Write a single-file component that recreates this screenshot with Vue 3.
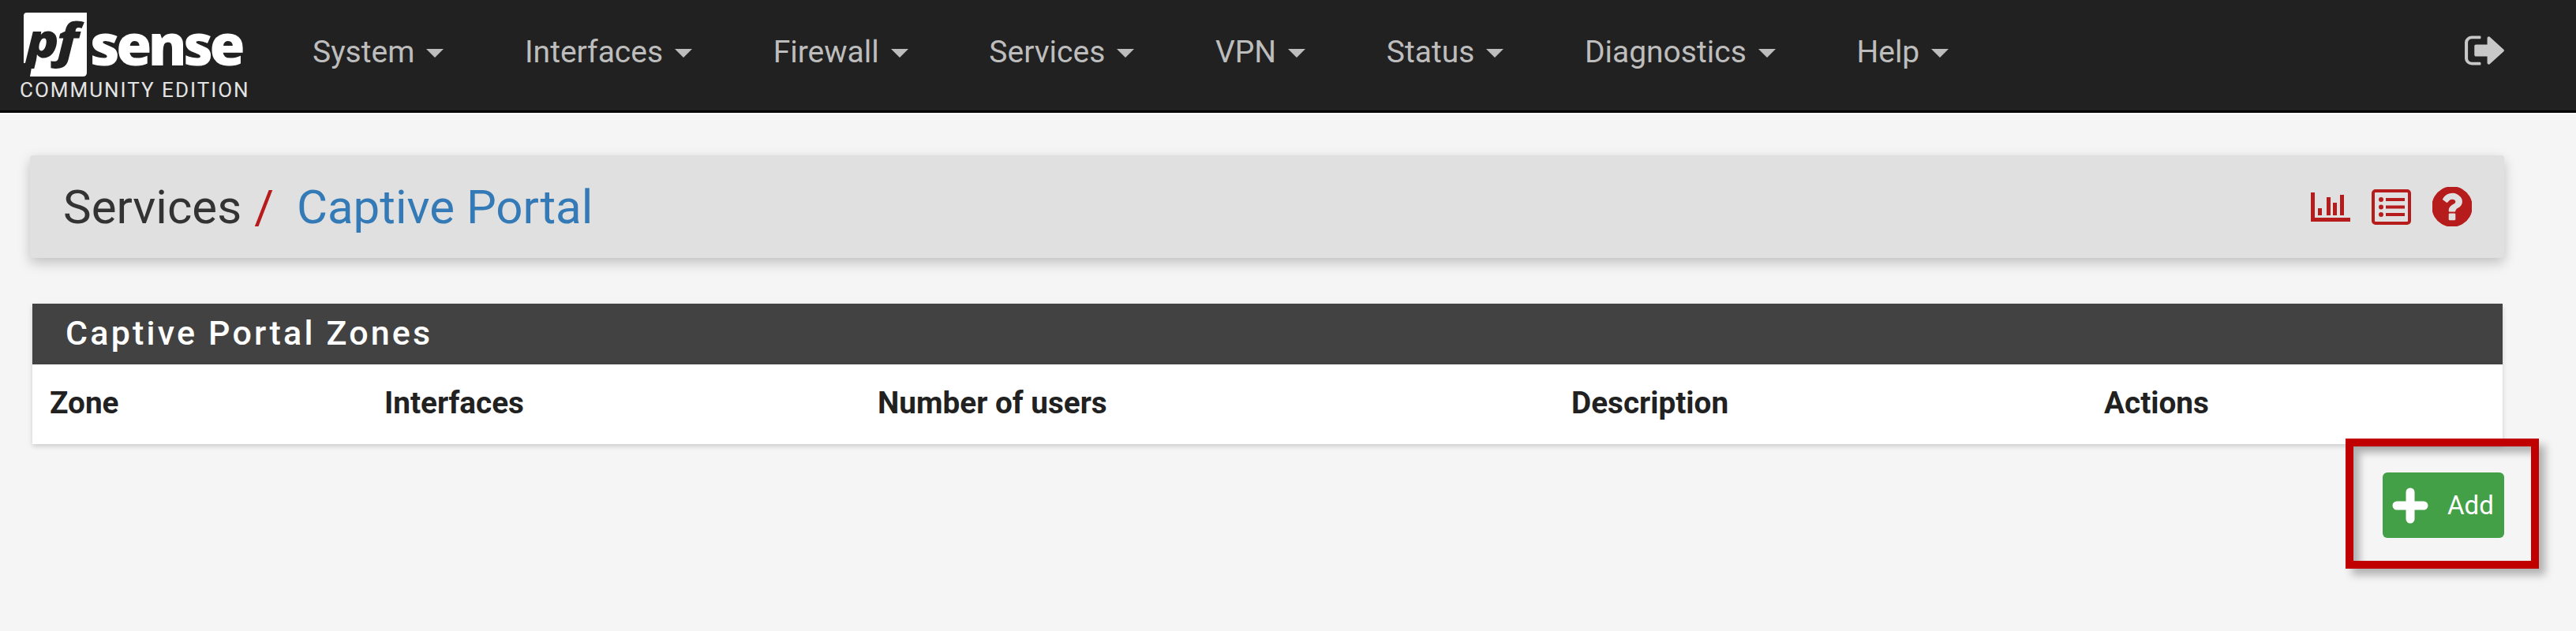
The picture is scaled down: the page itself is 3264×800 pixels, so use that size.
<script setup>
const menu = ['System', 'Interfaces', 'Firewall', 'Services', 'VPN', 'Status', 'Diagnostics', 'Help']
const columns = [
  { label: 'Zone', w: 424 },
  { label: 'Interfaces', w: 625 },
  { label: 'Number of users', w: 879 },
  { label: 'Description', w: 675 },
  { label: 'Actions', w: 460 }
]
</script>

<template>
  <div class="page">
    <header class="navbar">
      <div class="brand">
        <div class="logo">
          <svg class="logo-box" width="84" height="84" viewBox="0 0 84 84">
            <path d="M6 0 H82 V76 Q82 81 77 81 H10 L13 64 L2 64 V4 Q2 0 6 0Z" fill="#fff" />
            <text class="pf" transform="translate(5 57) scale(1.15 1)">pf</text>
          </svg>
          <span class="sense">sense</span>
        </div>
        <div class="edition">COMMUNITY EDITION</div>
      </div>
      <nav class="menu">
        <a v-for="item in menu" :key="item" class="menu-item">
          <span>{{ item }}</span><i class="caret"></i>
        </a>
      </nav>
      <svg class="logout" width="57" height="52" viewBox="0 0 1792 1792" preserveAspectRatio="none">
        <path fill="#c8c8c8" d="M704 1440q0 4 1 20t.5 26.5-3 23.5-10 19.5-20.5 6.5h-320q-119 0-203.5-84.5t-84.5-203.5v-704q0-119 84.5-203.5t203.5-84.5h320q13 0 22.5 9.5t9.5 22.5q0 4 1 20t.5 26.5-3 23.5-10 19.5-20.5 6.5h-320q-66 0-113 47t-47 113v704q0 66 47 113t113 47h312l11.5 1 11.5 3 8 5.5 7 9 2 13.5zm928-544q0 26-19 45l-544 544q-19 19-45 19t-45-19-19-45v-288h-448q-26 0-45-19t-19-45v-384q0-26 19-45t45-19h448v-288q0-26 19-45t45-19 45 19l544 544q19 19 19 45z" />
      </svg>
    </header>

    <main class="content">
      <section class="titlebar">
        <h1 class="crumbs">
          <span>Services</span><span class="slash">/</span><a class="current">Captive Portal</a>
        </h1>
        <div class="tools">
          <svg width="50" height="37" viewBox="0 0 50 37" fill="#b71c1c">
            <rect x="0" y="0" width="5" height="37" />
            <rect x="0" y="32" width="50" height="5" />
            <rect x="9" y="20" width="5" height="9" />
            <rect x="20" y="6" width="5" height="23" />
            <rect x="28" y="13" width="5" height="16" />
            <rect x="37" y="3" width="5" height="26" />
          </svg>
          <svg width="50" height="45" viewBox="0 0 50 45" fill="#b71c1c">
            <rect x="2" y="2" width="46" height="41" rx="3" fill="none" stroke="#b71c1c" stroke-width="4" />
            <circle cx="12" cy="13" r="3" />
            <circle cx="12" cy="22.500" r="3" />
            <circle cx="12" cy="32" r="3" />
            <rect x="18" y="11" width="24" height="4" />
            <rect x="18" y="20.500" width="24" height="4" />
            <rect x="18" y="30" width="24" height="4" />
          </svg>
          <svg width="50" height="50" viewBox="150 150 1492 1492">
            <path fill="#b71c1c" d="M1024 1376v-192q0-14-9-23t-23-9h-192q-14 0-23 9t-9 23v192q0 14 9 23t23 9h192q14 0 23-9t9-23zm256-672q0-88-55.500-163t-138.500-116-170-41q-243 0-371 213-15 24 8 42l132 100q7 6 19 6 16 0 25-12 53-68 86-92 34-24 86-24 48 0 85.500 26t37.500 59q0 38-20 61t-68 45q-63 28-115.500 86.500t-52.500 125.500v36q0 14 9 23t23 9h192q14 0 23-9t9-23q0-19 21.500-49.500t54.500-49.500q32-18 49-28.500t46-35 44.500-48 28-60.500 12.500-81zm384 192q0 209-103 385.500t-279.500 279.500-385.500 103-385.500-103-279.500-279.500-103-385.500 103-385.500 279.500-279.500 385.500-103 385.500 103 279.500 279.500 103 385.500z" />
          </svg>
        </div>
      </section>

      <section class="panel">
        <h2 class="panel-heading">Captive Portal Zones</h2>
        <div class="panel-head-row">
          <div v-for="col in columns" :key="col.label" class="th" :style="{ width: col.w + 'px' }">{{ col.label }}</div>
        </div>
      </section>

      <div class="actions">
        <button class="add-btn">
          <svg width="46" height="46" viewBox="0 0 46 46">
            <path d="M23 6 V40 M6 23 H40" stroke="#fff" stroke-width="11" stroke-linecap="round" />
          </svg>
          <span>Add</span>
        </button>
        <div class="highlight"></div>
      </div>
    </main>
  </div>
</template>

<style>
html, body { margin: 0; background: #f5f5f5; }
</style>

<style scoped>
.page {
  height: 800px;
  background: #f5f5f5;
  font-family: Roboto, "Liberation Sans", sans-serif;
  overflow: hidden;
}
.navbar {
  height: 143px;
  box-sizing: border-box;
  background: #212121;
  border-bottom: 3px solid #000;
  box-shadow: 0 2px 0 #fff;
  display: flex;
  align-items: flex-start;
  padding: 0 86px 0 25px;
}
.brand {
  width: 371px;
  flex: none;
  padding-top: 14px;
}
.logo {
  display: flex;
  align-items: flex-end;
  height: 86px;
  margin-left: 3px;
}
.logo-box { flex: none; overflow: visible; }
.pf {
  font-family: "Open Sans", sans-serif;
  font-weight: 800;
  font-style: italic;
  font-size: 60px;
  letter-spacing: -3px;
  fill: #212121;
}
.sense {
  font-family: "Open Sans", sans-serif;
  font-weight: 800;
  font-size: 73px;
  line-height: 73px;
  letter-spacing: -4.500px;
  color: #fff;
  margin-left: 2px;
  margin-bottom: 9px;
}
.edition {
  font-size: 26px;
  line-height: 26px;
  letter-spacing: 2px;
  color: #e4e4e4;
  white-space: nowrap;
  margin-top: 1px;
}
.menu {
  display: flex;
  gap: 102.600px;
  flex: 1;
  height: 131px;
  align-items: center;
}
.menu-item {
  display: flex;
  align-items: center;
  gap: 15px;
  font-size: 39px;
  color: #bdbdbd;
  white-space: nowrap;
}
.caret {
  width: 0;
  height: 0;
  border-left: 11px solid transparent;
  border-right: 11px solid transparent;
  border-top: 11px solid #bdbdbd;
  margin-top: 4px;
}
.logout {
  margin-top: 38px;
  flex: none;
}
.content {
  padding: 54px 91px 0 38px;
}
.titlebar {
  height: 130px;
  box-sizing: border-box;
  background: #e0e0e0;
  border-radius: 4px;
  box-shadow: 0 6px 16px rgba(0, 0, 0, .22);
  display: flex;
  align-items: center;
  justify-content: space-between;
  padding: 0 41px 0 42px;
}
.crumbs {
  margin: 0;
  font-size: 60px;
  font-weight: 400;
  color: #333;
  display: flex;
  align-items: baseline;
}
.slash { color: #b71c1c; margin-left: 16px; margin-right: 29px; }
.current { color: #337ab7; }
.tools {
  display: flex;
  align-items: center;
  gap: 27px;
}
.panel {
  margin: 58px 2px 0 3px;
  background: #fff;
  box-shadow: 0 3px 6px rgba(0, 0, 0, .16);
}
.panel-heading {
  margin: 0;
  height: 77px;
  box-sizing: border-box;
  background: #424242;
  color: #fff;
  font-size: 43px;
  font-weight: 500;
  letter-spacing: 3.200px;
  line-height: 74px;
  padding-left: 42px;
}
.panel-head-row {
  display: flex;
  height: 101px;
  align-items: center;
  padding-left: 22px;
}
.th {
  flex: none;
  font-size: 38.700px;
  font-weight: 700;
  color: #212121;
  padding-bottom: 4px;
}
.actions {
  position: relative;
  display: flex;
  justify-content: flex-end;
  margin-top: 36px;
}
.add-btn {
  width: 154px;
  height: 83px;
  border: 0;
  border-radius: 6px;
  background: #43a047;
  color: #fff;
  font-family: inherit;
  font-size: 33px;
  display: flex;
  align-items: center;
  padding: 0 0 0 12px;
  gap: 24px;
}
.highlight {
  position: absolute;
  right: -44px;
  top: -43px;
  width: 245px;
  height: 165px;
  box-sizing: border-box;
  border: 10px solid #c00000;
  box-shadow: 8px 8px 10px rgba(0, 0, 0, .28), inset 8px 8px 10px rgba(0, 0, 0, .28);
}
</style>
